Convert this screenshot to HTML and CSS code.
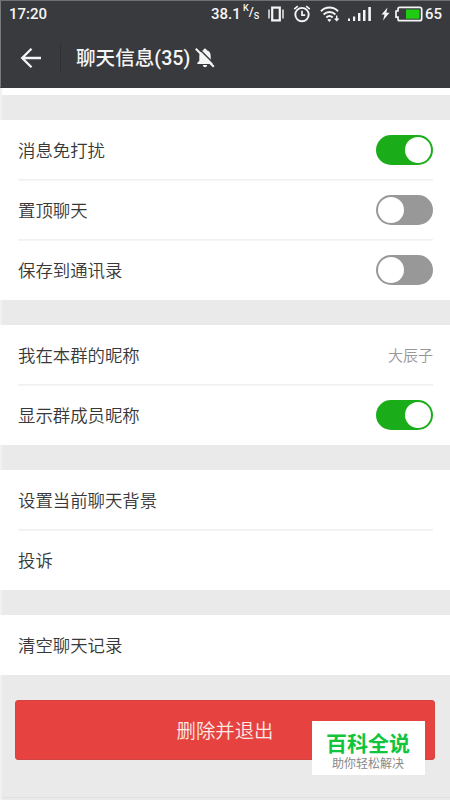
FILE: index.html
```html
<!DOCTYPE html>
<html lang="zh-CN">
<head>
<meta charset="utf-8">
<title>聊天信息</title>
<link rel="stylesheet" href="styles.css">
</head>
<body>
<div class="screen">
  <header class="header">
    <div class="status">
      <span class="time">17:20</span>
      <span class="speed">38.1</span>
      <span class="unit"><span class="unit-k">K</span><span class="unit-slash">/</span><span class="unit-s">S</span></span>
      <svg class="vibrate" width="16" height="16" viewBox="0 0 16 16" fill="none" stroke="currentColor"><rect x="4.2" y="1.6" width="7.6" height="12.8" stroke-width="2.2"/><path d="M1 3.5v9M15 3.5v9" stroke-width="1.4"/></svg>
      <svg class="alarm" width="18" height="18" viewBox="0 0 18 18" fill="none" stroke="currentColor"><circle cx="9" cy="9.6" r="6.7" stroke-width="1.9"/><path d="M9 5.8v4.3h3.2" stroke-width="1.7"/><path d="M1.2 4.2 4.800 1.2M16.8 4.2 13.2 1.2" stroke-width="1.6"/></svg>
      <svg class="wifi" width="20" height="17" viewBox="0 0 20 17" fill="none" stroke="currentColor"><path d="M1 5.2C5.8.4 13.2.4 18 5.2M3.600 8.5c3.4-3.2 8.4-3.2 11.8 0M6.300 11.500c1.9-1.7 4.5-1.7 6.4 0" stroke-width="2"/><path d="m9.300 16-2-2.200q2-1.500 4 0z" fill="currentColor" stroke="none"/><path d="M16.700 9.500v5M14.800 12.600l1.900 2 1.900-2" stroke-width="1.4"/></svg>
      <svg class="signal" width="24" height="16" viewBox="0 0 24 16" fill="currentColor"><path d="M0 12.500h2V15H0zM5 10.500h2.200V15H5zM10 7h2.400v8H10zM15 4h2.500v11H15zM20.300 1h2.600v14h-2.600z"/></svg>
      <svg class="bolt" width="9" height="14" viewBox="0 0 9 14" fill="currentColor"><path d="M6.500.5.5 7.500h3L2 13.500l6.500-7.700H5.300z"/></svg>
      <svg class="battery" width="28" height="16" viewBox="0 0 28 16"><path d="M4.500 1.300h20.200q2 0 2 2v9.400q0 2-2 2H4.500q-1.500 0-1.500-2v-1.500H1V5h2V3.300q0-2 1.500-2z" fill="none" stroke="#f5f5f5" stroke-width="1.700"/><path d="M11 3.500h13.500v9.200H11z" fill="#1fcc12"/></svg>
      <span class="charge">65</span>
    </div>
    <div class="titlebar">
      <svg class="back" width="22" height="22" viewBox="0 0 22 22" fill="none" stroke="currentColor" stroke-width="2.3"><path d="M21 11H2.500M11.500 1.700 2.200 11l9.300 9.300"/></svg>
      <span class="rule"></span>
      <h1 class="title">聊天信息(35)</h1>
      <svg class="muted" width="20" height="22" viewBox="0 0 20 22"><path d="M10 1.500q1.500 0 1.700 1.800 4 1.200 4 6v4.500l2 2.200v1H2.300v-1l2-2.200V9.300q0-4.800 4-6Q8.500 1.500 10 1.500zM7.800 18h4.400q-.3 2.300-2.200 2.300T7.800 18z" fill="#f5f5f5"/><path d="m2.200 0 18 18" stroke="#393a3e" stroke-width="1.500"/><path d="m.8 1.800 18 18" stroke="#f5f5f5" stroke-width="2"/></svg>
    </div>
  </header>

  <main class="content">
    <section class="group">
      <div class="row"><span class="label">消息免打扰</span><span class="switch on"></span></div>
      <div class="row"><span class="label">置顶聊天</span><span class="switch"></span></div>
      <div class="row"><span class="label">保存到通讯录</span><span class="switch"></span></div>
    </section>
    <section class="group">
      <div class="row"><span class="label">我在本群的昵称</span><span class="value">大辰子</span></div>
      <div class="row"><span class="label">显示群成员昵称</span><span class="switch on"></span></div>
    </section>
    <section class="group">
      <div class="row"><span class="label">设置当前聊天背景</span></div>
      <div class="row"><span class="label">投诉</span></div>
    </section>
    <section class="group">
      <div class="row"><span class="label">清空聊天记录</span></div>
    </section>
    <div class="leave">删除并退出</div>
    <div class="edge"></div>
  </main>

  <aside class="stamp">
    <div class="stamp-name">百科全说</div>
    <div class="stamp-line">助你轻松解决</div>
  </aside>
</div>
</body>
</html>
```
FILE: styles.css
```css
* { box-sizing: border-box; }

body {
  margin: 0;
  background: #eaeaea;
  font-family: Roboto, "Noto Sans CJK SC", sans-serif;
}

.screen {
  position: relative;
  width: 450px;
  height: 800px;
  overflow: hidden;
}

.header {
  height: 88px;
  background: #393a3e;
  border-top: 1px solid #6d7072;
  border-left: 1px solid #77797b;
  border-bottom: 1px solid #38393c;
  color: #f5f5f5;
}

.status {
  display: flex;
  align-items: center;
  height: 26px;
  padding-left: 8px;
  font-size: 15px;
  font-weight: 500;
  line-height: 20px;
}

.status svg { flex: none; }
.time { width: 202px; }
.speed { width: 32px; }

.unit {
  display: flex;
  width: 25px;
  font-size: 9px;
  line-height: 16px;
}

.unit-k { margin-top: -4px; }
.unit-slash { font-size: 13px; }
.unit-s { margin-top: 4px; }
.vibrate { margin-right: 9px; }
.alarm { margin-right: 9px; }
.wifi { margin-right: 8px; }
.signal { margin-right: 9px; }
.bolt { margin-right: 5px; }
.battery { margin-right: 2px; }

.titlebar {
  display: flex;
  align-items: center;
  height: 61px;
  padding-left: 19px;
}

.rule {
  width: 1px;
  height: 28px;
  margin: 0 15px 0 18px;
  background: #2f3033;
}

.title {
  margin: 0;
  padding-top: 2px;
  font-size: 19.6px;
  font-weight: 500;
  line-height: 30px;
}

.muted { margin-left: 5px; }

.content {
  height: 712px;
  padding-top: 32px;
  border-left: 2px solid #f1f1f1;
  background: linear-gradient(#fff 7px, #eaeaea 7px);
}

.group {
  margin: 0 0 25px -2px;
  padding: 0 17px 0 18px;
  background: #fff;
}

.row {
  display: flex;
  align-items: center;
  justify-content: space-between;
  height: 60px;
  color: #383838;
  font-size: 17.4px;
  font-weight: 350;
}

.row + .row { box-shadow: 0 -1px #f0f0f0, inset 0 1px #f5f5f5; }

.label { padding-bottom: 2px; }

.value {
  padding-bottom: 2px;
  color: #999;
  font-size: 15px;
}

.switch {
  display: flex;
  width: 57px;
  height: 30px;
  padding: 2px;
  border-radius: 15px;
  background: #989898;
}

.switch::before {
  width: 26px;
  height: 26px;
  border-radius: 50%;
  background: #fff;
  content: "";
}

.switch.on {
  justify-content: flex-end;
  background: #1aad19;
}

.leave {
  width: 420px;
  height: 60px;
  margin-left: 13px;
  padding-top: 2px;
  border: 1px solid #d54442;
  border-radius: 3px;
  background: #e64340;
  color: #fbe9e6;
  font-size: 19.4px;
  font-weight: 350;
  line-height: 58px;
  text-align: center;
}

.edge {
  height: 1px;
  margin-top: 37px;
  background: #e0e0e0;
}

.stamp {
  position: absolute;
  top: 721px;
  left: 312px;
  width: 113px;
  height: 54px;
  padding: 9px 1px 0 0;
  background: #fff;
  text-align: center;
}

.stamp-name {
  color: #10c53c;
  font-size: 21px;
  font-weight: 700;
  line-height: 28px;
}

.stamp-line {
  color: #888;
  font-size: 12px;
  line-height: 12px;
}
```
